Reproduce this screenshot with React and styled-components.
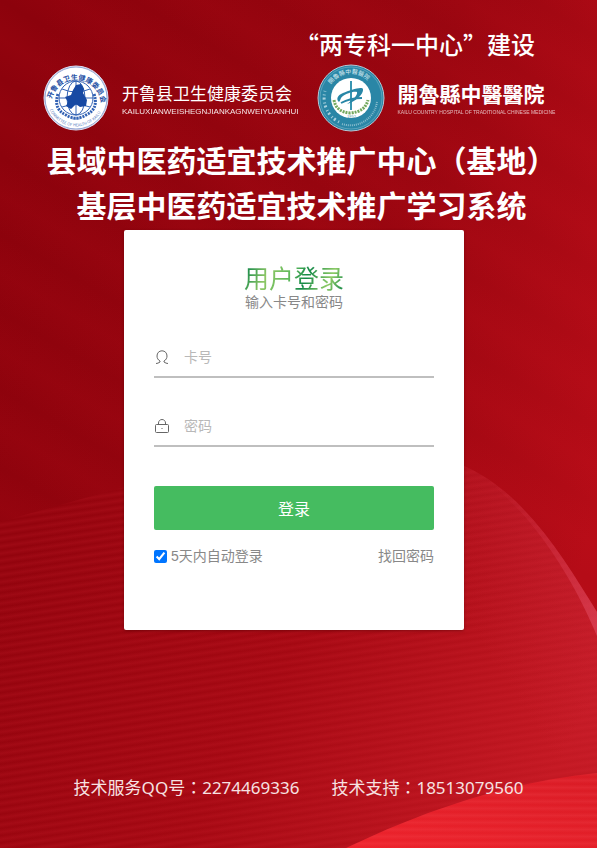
import React, { useState } from 'react';
import styled, { createGlobalStyle } from 'styled-components';

const cjk = '"Noto Sans CJK SC", sans-serif';

const GlobalStyle = createGlobalStyle`
  *, *::before, *::after { box-sizing: border-box; }
  body { margin: 0; font-family: "Noto Sans", ${cjk}; background: #9c0711; }
`;

const Page = styled.div`
  position: relative;
  isolation: isolate;
  min-height: 100vh;
  display: flex;
  flex-direction: column;
  align-items: center;
  overflow: hidden;
`;

const Backdrop = styled.svg`
  position: absolute;
  inset: 0;
  z-index: -1;
  width: 100%;
  height: 100%;
`;

const Header = styled.header`
  width: 100%;
  max-width: 597px;
  padding: 26px 36px 3px 42px;
  color: #fff;
  font-family: ${cjk};
`;

const Slogan = styled.p`
  margin: 0;
  padding-right: 26px;
  text-align: right;
  font-size: 24px;
  line-height: 36px;
  font-weight: 500;
  white-space: nowrap;
`;

const Partners = styled.div`
  display: flex;
  gap: 19px;
  align-items: center;
  padding-top: 2px;
`;

const Partner = styled.div`
  display: flex;
  align-items: center;
  gap: 12px;
  white-space: nowrap;
`;

const Emblem = styled.svg`
  width: 68px;
  height: 68px;
  flex: none;
`;

const PartnerText = styled.div`
  padding-top: 3px;
`;

const PartnerName = styled.div`
  font-size: ${p => (p.$bold ? 21 : 17)}px;
  font-weight: ${p => (p.$bold ? 700 : 400)};
  line-height: 24px;
`;

const PartnerLatin = styled.div`
  font-family: "Liberation Sans", sans-serif;
  font-size: ${p => (p.$small ? 5 : 8)}px;
  line-height: 14px;
  opacity: ${p => (p.$small ? 0.7 : 0.9)};
`;

const Title = styled.h1`
  margin: 5px 0 0;
  display: flex;
  flex-direction: column;
  align-items: center;
  font-size: 30px;
  line-height: 45px;
  font-weight: 700;
  white-space: nowrap;
`;

const TitleLine = styled.span`
  display: block;
`;

const Centered = styled.span`
  font-family: "Noto Sans CJK TC", sans-serif;
`;

const CardArea = styled.main`
  padding-right: 9px;
`;

const Card = styled.form`
  width: 340px;
  max-width: 100%;
  padding: 34px 30px 63px;
  border-radius: 2px;
  background: #fff;
  box-shadow: 0 1px 3px rgba(60, 0, 0, 0.4);
  font-family: "Liberation Sans", ${cjk};
`;

const CardTitle = styled.h2`
  width: fit-content;
  margin: 0 auto;
  font: 400 25px/30px "Liberation Sans", ${cjk};
  background: linear-gradient(115deg, #16894a 4%, #8fc766 24%, #5cb85a 46%, #138847 60%, #8ecb66 82%, #16894a 98%);
  background-clip: text;
  color: transparent;
`;

const CardHint = styled.p`
  margin: 0 0 28px;
  text-align: center;
  color: #888;
  font-size: 14px;
  line-height: 16px;
`;

const Field = styled.label`
  display: flex;
  align-items: center;
  gap: 14px;
  height: 40px;
  margin-bottom: 29px;
  border-bottom: 2px solid #bfbfbf;
  &:last-of-type { margin-bottom: 39px; }
`;

const FieldIcon = styled.svg`
  width: 16px;
  height: 16px;
  flex: none;
  fill: none;
  stroke: #666;
`;

const Input = styled.input`
  flex: 1;
  min-width: 0;
  padding: 0;
  border: 0;
  outline: 0;
  background: transparent;
  font: 14px "Liberation Sans", ${cjk};
  color: #555;
  &::placeholder { color: #b8b8b8; opacity: 1; }
`;

const Submit = styled.button`
  display: block;
  width: 100%;
  height: 44px;
  padding: 0;
  border: 0;
  border-radius: 2px;
  background: #45bc60;
  color: #fff;
  font: 16px "Liberation Sans", ${cjk};
`;

const Options = styled.div`
  display: flex;
  justify-content: space-between;
  margin-top: 15px;
  font-size: 14px;
  line-height: 22px;
  color: #888;
`;

const Remember = styled.label`
  display: flex;
  gap: 4px;
  align-items: center;
`;

const Checkbox = styled.input`
  width: 13px;
  height: 13px;
  margin: 0;
  accent-color: #0075ff;
`;

const Recover = styled.a`
  color: inherit;
  text-decoration: none;
`;

const Footer = styled.footer`
  width: 100%;
  margin-top: auto;
  padding: 0 20px 47px;
  display: flex;
  justify-content: center;
  gap: 32px;
  color: #f7e2e2;
  font: 17px/26px "Noto Sans", ${cjk};
  white-space: nowrap;
`;

const wave = 'M0 522C150 480 330 420 464 466C525 492 566 562 597 612V848H0Z';
const corner = 'M346 848C430 808 510 782 597 773V848Z';

function Background() {
  return (
    <Backdrop viewBox="0 0 597 848" preserveAspectRatio="none" aria-hidden="true">
      <defs>
        <linearGradient id="base" x1="0" y1="0.2" x2="1" y2="0.6">
          <stop offset="0" stopColor="#8c020c" />
          <stop offset="0.6" stopColor="#9a0610" />
          <stop offset="1" stopColor="#b50c17" />
        </linearGradient>
        <linearGradient id="waveFill" gradientUnits="userSpaceOnUse" x1="60" y1="480" x2="560" y2="760">
          <stop offset="0" stopColor="#92030d" />
          <stop offset="0.5" stopColor="#a40812" />
          <stop offset="1" stopColor="#c21822" />
        </linearGradient>
        <linearGradient id="waveEdge" gradientUnits="userSpaceOnUse" x1="440" y1="580" x2="528" y2="524">
          <stop offset="0" stopColor="#d03045" stopOpacity="0" />
          <stop offset="1" stopColor="#d03045" stopOpacity="0.2" />
        </linearGradient>
        <linearGradient id="rim" gradientUnits="userSpaceOnUse" x1="490" y1="480" x2="597" y2="620">
          <stop offset="0" stopColor="#d8344a" stopOpacity="0" />
          <stop offset="1" stopColor="#e04a60" stopOpacity="0.6" />
        </linearGradient>
        <linearGradient id="corner" x1="0" y1="1" x2="1" y2="0">
          <stop offset="0" stopColor="#ee222b" />
          <stop offset="1" stopColor="#d81a24" />
        </linearGradient>
        <linearGradient id="bands" gradientUnits="userSpaceOnUse" x1="0" y1="0" x2="-34" y2="58" spreadMethod="repeat">
          <stop offset="0" stopColor="#e01525" stopOpacity="0" />
          <stop offset="0.5" stopColor="#e01525" stopOpacity="0.07" />
          <stop offset="1" stopColor="#e01525" stopOpacity="0" />
        </linearGradient>
        <linearGradient id="lines" gradientUnits="userSpaceOnUse" x1="0" y1="0" x2="1" y2="7" spreadMethod="repeat">
          <stop offset="0" stopColor="#e83040" stopOpacity="0" />
          <stop offset="0.5" stopColor="#e83040" stopOpacity="0.14" />
          <stop offset="1" stopColor="#e83040" stopOpacity="0" />
        </linearGradient>
        <linearGradient id="cornerLines" gradientUnits="userSpaceOnUse" x1="0" y1="0" x2="0" y2="7" spreadMethod="repeat">
          <stop offset="0" stopColor="#ff6068" stopOpacity="0" />
          <stop offset="0.5" stopColor="#ff6068" stopOpacity="0.16" />
          <stop offset="1" stopColor="#ff6068" stopOpacity="0" />
        </linearGradient>
      </defs>
      <rect width="597" height="848" fill="url(#base)" />
      <rect width="597" height="848" fill="url(#bands)" />
      <path d={wave} fill="url(#waveFill)" />
      <path d={wave} fill="url(#waveEdge)" />
      <path d={wave} fill="url(#lines)" />
      <path d="M464 466C525 492 566 562 597 612V636C574 580 527 500 464 466Z" fill="url(#rim)" />
      <path d={corner} fill="url(#corner)" />
      <path d={corner} fill="url(#cornerLines)" />
    </Backdrop>
  );
}

function HealthEmblem() {
  return (
    <Emblem viewBox="0 0 68 68" role="img" aria-label="开鲁县卫生健康委员会">
      <defs>
        <path id="healthTop" d="M9 41A25 25 0 1 1 59 41" />
        <path id="healthBottom" d="M6 41A29 29 0 0 0 62 41" />
      </defs>
      <circle cx="34" cy="34" r="32" fill="#fff" stroke="#d9dbef" />
      <circle cx="34" cy="34" r="31" fill="none" stroke="#4668b5" strokeWidth="0.6" />
      <g fill="none" stroke="#3262b4">
        <circle cx="34" cy="34" r="17" />
        <ellipse cx="34" cy="34" rx="9" ry="17" />
        <path d="M34 17V51M17 34H51M20 25Q34 31 48 25M20 43Q34 38 48 43" />
        <path d="M16 30Q11 45 24 51Q30 55 38 54M52 30Q57 45 44 51Q38 55 30 54" strokeWidth="3" strokeDasharray="2 1" />
      </g>
      <path d="M34 21L39 20L42 25L41 29L45 36L44 42L38 43L34 40L29 45L24 42L26 38L23 33L29 31L31 26Z" fill="#1749a3" />
      <text fill="#244fa4" fontSize="7" fontWeight="700"><textPath href="#healthTop" startOffset="6">开鲁县卫生健康委员会</textPath></text>
      <text fill="#547abd" fontSize="4"><textPath href="#healthBottom" startOffset="5">COMMITTEE OF HEALTH OF KAILU</textPath></text>
    </Emblem>
  );
}

function HospitalEmblem() {
  return (
    <Emblem viewBox="0 0 68 68" role="img" aria-label="開魯縣中醫醫院">
      <defs>
        <path id="hospitalTop" d="M12 24A24 24 0 0 1 57 27" />
      </defs>
      <circle cx="34" cy="34" r="33" fill="#2a86a6" stroke="#b8c7d2" />
      <circle cx="34" cy="34" r="31" fill="none" stroke="#88bfd0" strokeWidth="0.5" />
      <circle cx="34" cy="34" r="20" fill="#fff" />
      <path d="M17 36Q19 48 33 49Q48 48 51 36" fill="none" stroke="#74a85e" strokeWidth="3" strokeDasharray="2 1" />
      <path d="M34 17V46" stroke="#3895b2" strokeWidth="2" />
      <path d="M22 38C19 36 20 31 26 29C33 26 45 22 46 25C47 30 38 38 30 40C36 36 41 31 40 28C36 27 29 30 26 32C23 34 24 36 22 38Z" fill="#2786a6" />
      <path d="M24 39Q33 34 45 34" fill="none" stroke="#2786a6" strokeWidth="2" />
      <text fill="#d6eaf0" fontSize="6"><textPath href="#hospitalTop" startOffset="4">開魯縣中醫醫院</textPath></text>
      <path d="M22 58A27 27 0 0 1 8 27" fill="none" stroke="#a9d1de" strokeWidth="3" strokeDasharray="1 3 2 2" />
      <path d="M25 60A27 27 0 0 0 60 38" fill="none" stroke="#8abccd" strokeWidth="2" strokeDasharray="1 1" />
      <text x="30" y="54" fill="#5c98a8" fontSize="4">1952</text>
    </Emblem>
  );
}

export default function App() {
  const [remember, setRemember] = useState(true);
  return (
    <Page>
      <GlobalStyle />
      <Background />
      <Header>
        <Slogan>“两专科一中心”建设</Slogan>
        <Partners>
          <Partner>
            <HealthEmblem />
            <PartnerText>
              <PartnerName>开鲁县卫生健康委员会</PartnerName>
              <PartnerLatin>KAILUXIANWEISHEGNJIANKAGNWEIYUANHUI</PartnerLatin>
            </PartnerText>
          </Partner>
          <Partner>
            <HospitalEmblem />
            <PartnerText>
              <PartnerName $bold>開魯縣中醫醫院</PartnerName>
              <PartnerLatin $small>KAILU COUNTRY HOSPITAL OF TRADITIONAL CHINESE MEDICINE</PartnerLatin>
            </PartnerText>
          </Partner>
        </Partners>
        <Title>
          <TitleLine>县域中医药适宜技术推广中心（基地）</TitleLine>
          <TitleLine>基层中医药适宜技术推广学习系统</TitleLine>
        </Title>
      </Header>
      <CardArea>
        <Card onSubmit={e => e.preventDefault()}>
          <CardTitle>用户登录</CardTitle>
          <CardHint>输入卡号和密码</CardHint>
          <Field>
            <FieldIcon viewBox="0 0 16 16" aria-hidden="true">
              <path d="M2 14.5Q4 14.5 6 13V12C4 11 3 9 3 7C3 4 5 1.8 8 1.8S13 4 13 7C13 9 12 11 10 12V13Q12 14.5 14 14.5" />
            </FieldIcon>
            <Input type="text" aria-label="卡号" placeholder="卡号" />
          </Field>
          <Field>
            <FieldIcon viewBox="0 0 16 16" aria-hidden="true">
              <rect x="1.5" y="6.5" width="13" height="8" rx="1" />
              <path d="M4.5 6.5V5C4.5 3 6 1.5 8 1.5S11.5 3 11.5 5V6.5M8 10V11" />
            </FieldIcon>
            <Input type="password" aria-label="密码" placeholder="密码" />
          </Field>
          <Submit type="submit">登录</Submit>
          <Options>
            <Remember>
              <Checkbox type="checkbox" checked={remember} onChange={e => setRemember(e.target.checked)} />
              5天内自动登录
            </Remember>
            <Recover href="#recover">找回密码</Recover>
          </Options>
        </Card>
      </CardArea>
      <Footer>
        <span>技术服务QQ号<Centered>：</Centered>2274469336</span>
        <span>技术支持<Centered>：</Centered>18513079560</span>
      </Footer>
    </Page>
  );
}
